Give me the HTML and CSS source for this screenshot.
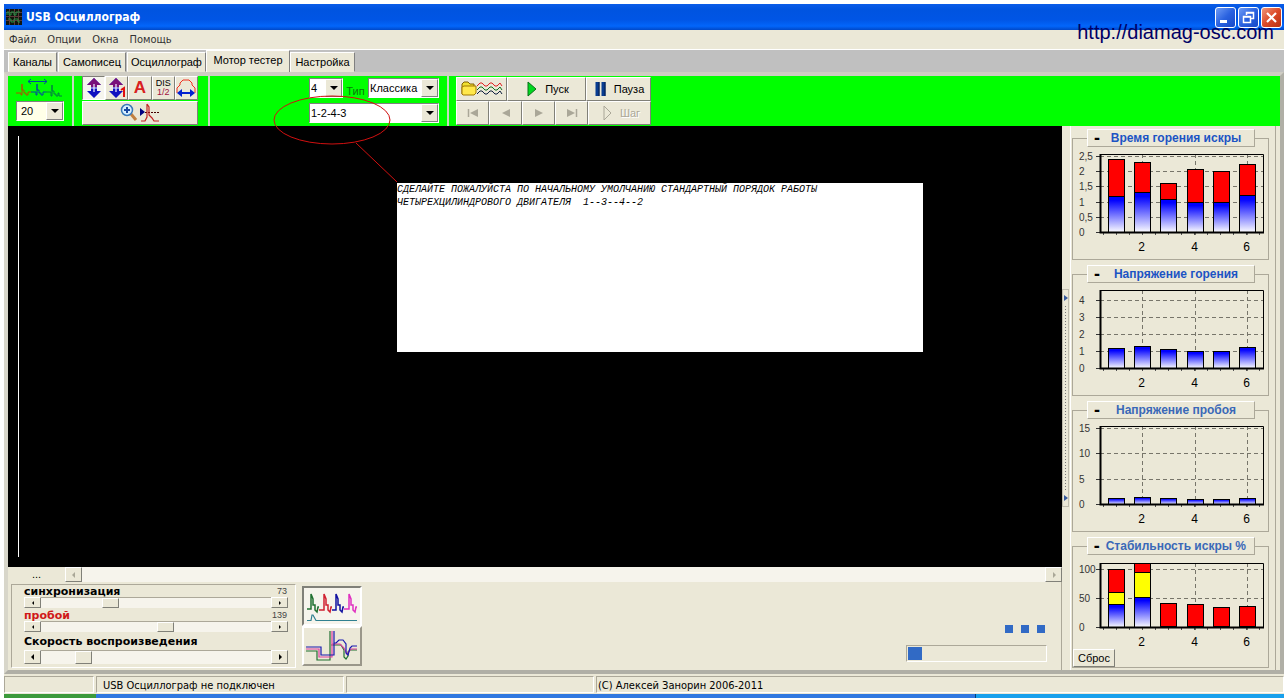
FILE: index.html
```html
<!DOCTYPE html>
<html lang="ru">
<head>
<meta charset="utf-8">
<title>USB Осциллограф</title>
<link rel="stylesheet" href="styles.css">
</head>
<body>
<div class="window">
  <header class="titlebar">
    <svg class="app-icon" viewBox="0 0 16 16"><rect width="16" height="16" fill="#10140c"/><path d="M0 3.500H16M0 7.500H16M0 11.500H16M3.500 0V16M8.500 0V16M12.500 0V16" stroke="#5b3a3a" stroke-width="1"/><path d="M1 6V3H3V6H5V3H8V6H10V3H14M2 10H5V13H8V10H12V13H14" fill="none" stroke="#279047"/></svg>
    <h1>USB Осциллограф</h1>
    <div class="window-buttons">
      <button class="win-btn" aria-label="Свернуть"><svg viewBox="0 0 19 19"><path d="M4 13.500H11" stroke="#fff" stroke-width="3"/></svg></button>
      <button class="win-btn" aria-label="Восстановить"><svg viewBox="0 0 19 19"><path d="M7.500 7V4.500H14.500V10.500H12M7 5H15" fill="none" stroke="#fff" stroke-width="1.500"/><path d="M4.500 8.500H11.500V14.500H4.500ZM4 9H12" fill="none" stroke="#fff" stroke-width="1.500"/></svg></button>
      <button class="win-btn close" aria-label="Закрыть"><svg viewBox="0 0 19 19"><path d="M5 5L14 14M14 5L5 14" stroke="#fff" stroke-width="2.200"/></svg></button>
    </div>
  </header>
  <nav class="menu">
    <button>Файл</button><button>Опции</button><button>Окна</button><button>Помощь</button>
  </nav>
  <div class="site-url">http://diamag-osc.com</div>
  <div class="tabs" role="tablist">
    <button role="tab" class="tab t1">Каналы</button>
    <button role="tab" class="tab t2">Самописец</button>
    <button role="tab" class="tab t3">Осциллограф</button>
    <button role="tab" class="tab t4 active" aria-selected="true">Мотор тестер</button>
    <button role="tab" class="tab t5">Настройка</button>
  </div>
  <div class="page">
    <div class="toolbar">
      <div class="tool-group sweep">
        <svg class="sweep-icon" viewBox="0 0 48 22"><path d="M12 3.500H31M15 1L12 3.500L15 6M28 1L31 3.500L28 6" fill="none" stroke="#0048a0"/><path d="M0 15H5V17H6V6V12H8V15H10V17H12V14H15" fill="none" stroke="#b05000"/><path d="M15 14H20V17H21V6V12H23V15H25V17H27V14H30" fill="none" stroke="#0048a0"/><path d="M30 14H35V18H36V7V13H38V16H40V18H42V15H43V18H46" fill="none" stroke="#008040"/></svg>
        <span class="combo cream"><select aria-label="Развёртка"><option>20</option></select><i class="drop"></i></span>
      </div>
      <div class="tool-group modes">
        <div class="row">
          <button class="tb pressed" aria-label="Размах"><svg viewBox="0 0 20 20"><path d="M10 0L17 7H13V13H17L10 20L3 13H7V7H3Z" fill="#1010c0"/><path d="M10 0L17 7H13V9H7V7H3Z" fill="#7a107a"/><path d="M10 6V14M4 10H16" stroke="#eef" stroke-width="1.200"/></svg></button>
          <button class="tb" aria-label="Размах первого"><svg viewBox="0 0 20 20"><path d="M9 0L16 7H12V13H16L9 20L2 13H6V7H2Z" fill="#1010c0"/><path d="M9 0L16 7H12V9H6V7H2Z" fill="#7a107a"/><path d="M9 6V14M3 10H14" stroke="#eef" stroke-width="1.200"/><path d="M14 12L17 10V19" fill="none" stroke="#e01010" stroke-width="2"/></svg></button>
          <button class="tb letter">A</button>
          <button class="tb dis"><span>DIS</span><span class="half">1/2</span></button>
          <button class="tb" aria-label="Период"><svg viewBox="0 0 20 20"><path d="M1 15V10L4 7V5L7 2H13L16 5V7L19 10V15" fill="none" stroke="#f03020"/><path d="M3 15H17" stroke="#0020d0" stroke-width="2"/><path d="M1 15L6 11V19ZM19 15L14 11V19Z" fill="#0020d0"/></svg></button>
        </div>
        <button class="tb wide" aria-label="Увеличить"><svg viewBox="0 0 40 20"><path d="M11 11L16 17" stroke="#c08040" stroke-width="3"/><circle cx="7" cy="7" r="5.500" fill="#d8efff" stroke="#3878b8" stroke-width="1.500"/><path d="M4 7H10M7 4V10" stroke="#1848a0" stroke-width="2"/><path d="M20 5V13L25 9Z" fill="#000080"/><path d="M25 9.500H39" stroke="#400" stroke-dasharray="2 1"/><path d="M21 18H25L27 14V1M27 1L29 4V12L32 15L34 18H39" fill="none" stroke="#c02020" stroke-width="1.200"/></svg></button>
      </div>
      <div class="tool-group order">
        <div class="row">
          <span class="combo cylinders"><select aria-label="Цилиндры"><option>4</option></select><i class="drop"></i></span>
          <label for="kind">Тип</label>
          <span class="combo kind"><select id="kind"><option>Классика</option></select><i class="drop"></i></span>
        </div>
        <span class="combo"><select aria-label="Порядок работы"><option>1-2-4-3</option></select><i class="drop"></i></span>
      </div>
      <div class="tool-group player">
        <div class="row">
          <button class="tb open" aria-label="Открыть запись"><svg viewBox="0 0 42 18"><path d="M1 14V4L3 2H7L9 4H13V7" fill="#f0e030" stroke="#806000"/><path d="M1 14V7L3 6H15V13L13 15H2Z" fill="#ffe84a" stroke="#a07800"/><path d="M16 6L19 3H21L24 6H26L29 3H31L34 6H36L39 3L41 6" fill="none" stroke="#e02020"/><path d="M16 10L19 7H21L24 10H26L29 7H31L34 10H36L39 7L41 10" fill="none" stroke="#107020"/><path d="M16 14L19 11H21L24 14H26L29 11H31L34 14H36L39 11L41 14" fill="none" stroke="#102040"/></svg></button>
          <button class="tb start"><svg class="i16" viewBox="0 0 16 16"><path d="M4 1L12 8L4 15Z" fill="#00d820" stroke="#087018"/></svg>Пуск</button>
          <button class="tb pause"><svg class="i16" viewBox="0 0 16 16"><path d="M4.500 1V15M10.500 1V15" stroke="#083c90" stroke-width="4"/><path d="M6 1V15M12 1V15" stroke="#061c48"/></svg>Пауза</button>
        </div>
        <div class="row">
          <button class="tb nav" disabled aria-label="В начало"><svg class="i16" viewBox="0 0 16 16"><path d="M3.500 4V12" stroke="#aaa798" stroke-width="1.500"/><path d="M13 4V12L5 8Z" fill="#aaa798"/></svg></button>
          <button class="tb nav" disabled aria-label="Назад"><svg class="i16" viewBox="0 0 16 16"><path d="M12 4V12L4 8Z" fill="#aaa798"/></svg></button>
          <button class="tb nav" disabled aria-label="Вперёд"><svg class="i16" viewBox="0 0 16 16"><path d="M4 4V12L12 8Z" fill="#aaa798"/></svg></button>
          <button class="tb nav" disabled aria-label="В конец"><svg class="i16" viewBox="0 0 16 16"><path d="M3 4V12L11 8Z" fill="#aaa798"/><path d="M12.500 4V12" stroke="#aaa798" stroke-width="1.500"/></svg></button>
          <button class="tb step" disabled><svg class="i16" viewBox="0 0 16 16"><path d="M5 1L12 8L5 15Z" fill="none" stroke="#aaa798"/></svg>Шаг</button>
        </div>
      </div>
    </div>

    <div class="content">
      <main class="left">
        <div class="scope"><div class="cursor-line"></div></div>
        <div class="hscroll"><span>...</span><button class="bevel" disabled aria-label="Влево"><svg viewBox="0 0 8 8"><path d="M5 1V7L2 4Z" fill="#aaa798"/></svg></button><div class="hatch"></div><button class="bevel" disabled aria-label="Вправо"><svg viewBox="0 0 8 8"><path d="M3 1V7L6 4Z" fill="#aaa798"/></svg></button></div>
        <div class="controls">
          <div class="sliders">
            <div class="caption"><label for="sync">синхронизация</label><output>73</output></div>
            <div class="slider"><button class="bevel" aria-label="Меньше"><svg viewBox="0 0 8 8"><path d="M5 2V6L3 4Z"/></svg></button><input id="sync" type="range" max="255" value="73"><button class="bevel" aria-label="Больше"><svg viewBox="0 0 8 8"><path d="M3 2V6L5 4Z"/></svg></button></div>
            <div class="caption hot"><label for="spark">пробой</label><output>139</output></div>
            <div class="slider"><button class="bevel" aria-label="Меньше"><svg viewBox="0 0 8 8"><path d="M5 2V6L3 4Z"/></svg></button><input id="spark" type="range" max="255" value="139"><button class="bevel" aria-label="Больше"><svg viewBox="0 0 8 8"><path d="M3 2V6L5 4Z"/></svg></button></div>
            <div class="caption speed"><label for="speed">Скорость воспроизведения</label></div>
            <div class="slider tall"><button class="bevel" aria-label="Медленнее"><svg viewBox="0 0 8 8"><path d="M5 1V7L2 4Z"/></svg></button><input id="speed" type="range" max="100" value="16"><button class="bevel" aria-label="Быстрее"><svg viewBox="0 0 8 8"><path d="M3 1V7L6 4Z"/></svg></button></div>
          </div>
          <div class="views">
            <button class="view on" aria-label="Парад"><svg viewBox="0 0 52 32"><g fill="none" stroke-width="1.500"><path d="M1 19H5V4L7 9V15H9V20L11 22L12 17H13" stroke="#207030"/><path d="M13 20H18V4L20 9V15H22V20L24 22L25 17H26" stroke="#d02030"/><path d="M26 20H30V4L32 9V15H34V20L36 22L37 17H38" stroke="#1010a0"/><path d="M38 19H43V4L45 9V15H47V20L49 22L50 17H51" stroke="#e030c0"/><path d="M1 30.500H5L6 25H7L10 30.500H51" stroke="#308090" stroke-width="1.200"/></g></svg></button>
            <button class="view" aria-label="Наложение"><svg viewBox="0 0 52 32"><g fill="none" stroke-width="1.200"><path d="M0 21H11V30H24V1M25 15H35L38 20V27L40 29L42 26V22L44 20H51" stroke="#207030"/><path d="M0 19H13V27H26V1M26 14H34L38 18L41 24L45 19H51" stroke="#e040a0"/><path d="M0 17H15V25H28V1M28 13H30L33 10H37L40 14V23L42 25L44 18L46 16H51" stroke="#1818b0"/></g></svg></button>
          </div>
          <div class="progress-area">
            <div class="dots"><i></i><i></i><i></i></div>
            <div class="progress"><i></i></div>
          </div>
        </div>
      </main>
      <div class="splitter"><div class="grip"><svg viewBox="0 0 6 8"><path d="M1 1V7L5 4Z"/></svg><svg viewBox="0 0 6 8"><path d="M1 1V7L5 4Z"/></svg></div></div>
      <aside class="charts">
        <fieldset><legend><button class="chart-title c1"><b>-</b><span>Время горения искры</span></button></legend><svg class="chart" data-chart="burn"></svg></fieldset>
        <fieldset><legend><button class="chart-title c1"><b>-</b><span>Напряжение горения</span></button></legend><svg class="chart" data-chart="voltage"></svg></fieldset>
        <fieldset><legend><button class="chart-title c2"><b>-</b><span>Напряжение пробоя</span></button></legend><svg class="chart" data-chart="breakdown"></svg></fieldset>
        <fieldset><legend><button class="chart-title c2"><b>-</b><span>Стабильность искры %</span></button></legend><svg class="chart short" data-chart="stability"></svg><button class="reset">Сброс</button></fieldset>
      </aside>
    </div>
  </div>
  <footer class="status"><span></span><span>USB Осциллограф не подключен</span><span></span><span>(C) Алексей Занорин 2006-2011</span></footer>
</div>
<div class="taskbar"><i></i><i></i><i></i></div>
<div class="note">СДЕЛАЙТЕ ПОЖАЛУЙСТА ПО НАЧАЛЬНОМУ УМОЛЧАНИЮ СТАНДАРТНЫЙ ПОРЯДОК РАБОТЫ<br>ЧЕТЫРЕХЦИЛИНДРОВОГО ДВИГАТЕЛЯ&nbsp; 1--3--4--2</div>
<svg class="callout" viewBox="0 0 130 90"><ellipse cx="62" cy="25" rx="58" ry="24"/><path d="M86 48L127 87"/></svg>
<script src="charts.js"></script>
</body>
</html>
```

FILE: styles.css
```css
* { box-sizing: border-box; }
body {
  margin: 0;
  min-height: 100vh;
  padding: 4px 4px 0;
  display: flex;
  flex-direction: column;
  background: #fff;
  color: #000;
  font: 11px/14px "Liberation Sans", Arial, sans-serif;
}
button, select, input { font: inherit; color: inherit; margin: 0; padding: 0; border-radius: 0; }
button { white-space: nowrap; }
svg { display: block; flex: none; }
.window { flex: 1; display: flex; flex-direction: column; background: #ebe8d7; position: relative; }

.titlebar {
  height: 26px;
  display: flex;
  align-items: center;
  gap: 4px;
  padding: 0 2px;
  background: linear-gradient(#0a5ce8, #0054e0 20%, #0055e5 60%, #0266fb 85%, #0048c8);
  color: #fff;
}
.app-icon { width: 16px; height: 16px; }
.titlebar h1 { margin: 0; flex: 1; font: bold 12px/16px "DejaVu Sans Condensed", "DejaVu Sans", sans-serif; }
.window-buttons { display: flex; gap: 2px; }
.win-btn { width: 21px; height: 21px; border: 1px solid #fff; border-radius: 3px; background: linear-gradient(135deg, #6f9cf5, #2a62e0 50%, #1648c8); }
.win-btn svg { width: 19px; height: 19px; }
.win-btn.close { background: linear-gradient(135deg, #f0967a, #dc4a28 50%, #b83010); }

.menu { height: 20px; display: flex; align-items: center; gap: 11px; padding: 0 5px; border-bottom: 1px solid #fff; }
.menu button { border: 0; background: none; font: 11px/14px "DejaVu Sans Condensed", "DejaVu Sans", sans-serif; color: #333; }
.site-url { position: absolute; top: 17px; right: 10px; font-size: 20px; line-height: 22px; color: #000066; }

.tabs { display: flex; align-items: flex-end; height: 22px; padding-left: 4px; background: #c0c0c0; }
.tab { height: 20px; border: 1px solid; border-color: #fff #808080 transparent #fff; background: #ebe8d7; margin-right: 1px; }
.tab.active { height: 22px; padding-bottom: 3px; border-bottom: 0; margin: 0; }
.t1 { width: 49px; }
.t2 { width: 68px; }
.t3 { width: 79px; margin: 0; }
.t4 { width: 84px; }
.t5 { width: 65px; }

.page { flex: 1; display: flex; flex-direction: column; border: 4px solid; border-color: #cfcdc4 #b0afa6 #b0afa6 #d8d6ca; }
.toolbar { display: flex; height: 50px; background: #00ff00; }
.tool-group { display: flex; flex-direction: column; gap: 1px; border-right: 2px solid #c8d8c0; }
.row { display: flex; }
.sweep { width: 66px; padding: 2px 8px 0; }
.sweep-icon { width: 48px; height: 22px; }
.modes { width: 136px; padding: 0 10px 0 8px; }
.order { width: 239px; padding: 2px 8px 0 99px; gap: 5px; }
.order .row { justify-content: space-between; }
.order label { align-self: flex-end; color: #087808; line-height: 13px; }
.player { padding: 1px 0 0 7px; gap: 0; border: 0; }
.player .tb { height: 24px; }

.combo { display: grid; height: 20px; border: 1px solid; border-color: #808080 #fff #fff #808080; background: #fff; }
.combo select { grid-area: 1 / 1; appearance: none; border: 0; background: none; padding-left: 1px; width: 100%; }
.drop { grid-area: 1 / 1; justify-self: end; width: 17px; background: #ebe8d7; border: 1px solid; border-color: #fff #808080 #808080 #fff; pointer-events: none; display: grid; place-items: center; }
.drop::after { content: ""; border: 4px solid transparent; border-top-color: #000; border-bottom: 0; }
.cream { background: #ffffe8; }
.cream select { padding-left: 4px; }
.cylinders { width: 34px; }
.kind { width: 71px; }

.tb { height: 24px; display: flex; align-items: center; justify-content: center; gap: 5px; background: #ebe8d7; border: 1px solid; border-color: #fff #808078 #808078 #fff; }
.tb:disabled { color: #aaa798; text-shadow: 1px 1px 0 #fff; }
.modes .row .tb { flex: 1; min-width: 0; }
.modes .tb svg { width: 20px; height: 20px; }
.modes .wide svg { width: 40px; }
.tb.pressed { border-color: #808078 #fff #fff #808078; background: #f6f5ee; }
.letter { font-weight: bold; font-size: 17px; color: #d82020; }
.dis { flex-direction: column; gap: 0; font-size: 9px; line-height: 9px; }
.half { color: #a01040; }
.i16 { width: 16px; height: 16px; }
.open { width: 51px; }
.open svg { width: 42px; height: 18px; }
.start { width: 79px; }
.pause { width: 65px; }
.nav { width: 33px; }
.step { width: 63px; }

.content { flex: 1; display: flex; }
.left { flex: 1; display: flex; flex-direction: column; min-width: 0; }
.scope { flex: 1; background: #000; padding: 10px; display: flex; }
.cursor-line { width: 1px; background: #fff; }
.hscroll { height: 15px; display: flex; }
.hscroll span { width: 57px; text-align: center; }
.hatch { flex: 1; background: #f6f4ec; }
.bevel { width: 17px; display: grid; place-items: center; background: #ebe8d7; border: 1px solid; border-color: #fff #808078 #808078 #fff; }
.bevel svg { width: 8px; height: 8px; }

.controls { height: 88px; display: flex; align-items: flex-start; gap: 6px; padding: 2px 14px 2px 3px; border-right: 1px solid #aca899; }
.sliders { width: 285px; height: 84px; padding: 0 7px 0 12px; border: 1px solid; border-color: #aca899 #fff #fff #aca899; }
.caption { display: flex; justify-content: space-between; height: 12px; font: bold 11px/13px "DejaVu Sans", Verdana, sans-serif; }
.caption output { font: 9px/13px "Liberation Sans", Arial, sans-serif; color: #444; padding-right: 1px; }
.hot label { color: #d01818; }
.caption.speed { height: 15px; line-height: 15px; margin-top: 2px; margin-bottom: 1px; }
.slider { display: flex; height: 11px; margin-bottom: 1px; }
.slider.tall { height: 14px; }
.slider .bevel { width: 17px; }
.slider input { flex: 1; min-width: 0; appearance: none; height: 100%; background: #f6f4ec; border-top: 1px solid #aca899; }
.slider input::-webkit-slider-thumb { appearance: none; width: 17px; height: 10px; background: #ebe8d7; border: 1px solid; border-color: #fff #808078 #808078 #fff; }
.slider.tall input::-webkit-slider-thumb { height: 13px; }
.views { display: flex; flex-direction: column; padding-top: 2px; }
.view { width: 60px; height: 40px; display: grid; place-items: center; background: #ebe8d7; border: 2px solid; border-color: #fff #9a978a #9a978a #fff; }
.view.on { border-color: #808078 #fff #fff #808078; background: #f6f4ec; }
.view svg { width: 52px; height: 32px; }
.progress-area { margin-left: auto; padding-top: 41px; }
.dots { display: flex; justify-content: flex-end; gap: 8px; padding-right: 2px; margin-bottom: 12px; }
.dots i { width: 8px; height: 8px; background: #316ac5; }
.progress { width: 141px; height: 17px; padding: 1px; border: 1px solid; border-color: #aca899 #fff #fff #aca899; }
.progress i { display: block; width: 14px; height: 13px; background: #316ac5; }

.splitter { width: 8px; display: flex; align-items: center; }
.grip { width: 7px; height: 218px; display: flex; flex-direction: column; justify-content: space-between; padding: 4px 0; border: 1px solid #c0bdae; background: repeating-linear-gradient(#777 0 1px, transparent 1px 3px) 2px 16px / 1px 186px no-repeat; }
.grip svg { width: 6px; height: 8px; fill: #35599c; }

.charts { width: 210px; display: flex; flex-direction: column; gap: 5px; padding: 3px 11px 0 1px; border-left: 1px solid #fff; background: linear-gradient(#aca899, #aca899) right 4px top / 1px 100% no-repeat; }
fieldset { margin: 0; padding: 0; border: 1px solid #aca899; min-width: 0; }
legend { padding: 0; margin-left: 14px; }
.chart-title { width: 168px; height: 18px; display: flex; align-items: center; background: #ebe8d7; border: 1px solid; border-color: #fff #aca899 #aca899 #fff; font-size: 12px; font-weight: bold; }
.chart-title b { width: 18px; font-size: 18px; color: #000; }
.chart-title span { flex: 1; padding-right: 8px; text-align: center; }
.c1 { color: #1c54c4; }
.c2 { color: #3a68b8; }
.chart { width: 194px; height: 112px; overflow: hidden; font-size: 10px; }
.chart.short { height: 94px; }
.chart .category { font-size: 12px; }
.reset { display: block; width: 42px; height: 18px; background: #ebe8d7; border: 1px solid; border-color: #fff #808078 #808078 #fff; }

.status { display: flex; gap: 2px; height: 20px; padding-top: 2px; font: 11px/17px "DejaVu Sans Condensed", "DejaVu Sans", sans-serif; }
.status span { height: 17px; padding-left: 6px; border: 1px solid; border-color: #aca899 #fff #fff #aca899; }
.status span:nth-child(1) { width: 90px; }
.status span:nth-child(2) { width: 248px; }
.status span:nth-child(3) { width: 248px; }
.status span:nth-child(4) { flex: 1; padding-left: 1px; }
.taskbar { height: 4px; display: flex; }
.taskbar i { background: #3078e0; flex: 880; }
.taskbar i:first-child { background: #3c9a3c; flex: 92; }
.taskbar i:last-child { background: #18a0ec; flex: 308; border-left: 1px solid #004080; }

.note { position: absolute; left: 397px; top: 183px; width: 526px; height: 169px; background: #fff; font: italic 10px/13px "Liberation Mono", monospace; white-space: nowrap; }
.callout { position: absolute; left: 270px; top: 95px; width: 130px; height: 90px; fill: none; stroke: #d01010; pointer-events: none; }
```

FILE: charts.js
```js
const NS = "http://www.w3.org/2000/svg";
const BAR_X = [35, 61, 87, 114, 140, 166];
const LEFT = 27, RIGHT = 190, TOP = 7;

// Each bar lists cumulative levels: blue, then the colours above it.
const charts = {
  burn: { base: 85, unit: 30.4, ticks: [0, 0.5, 1, 1.5, 2, 2.5], colors: ["blue", "#f00"],
    bars: [[1.2, 2.4], [1.32, 2.3], [1.1, 1.6], [1, 2.07], [1, 2], [1.22, 2.23]] },
  voltage: { base: 85, unit: 17, ticks: [0, 1, 2, 3, 4], colors: ["blue"],
    bars: [[1.17], [1.3], [1.1], [1], [1], [1.22]] },
  breakdown: { base: 85, unit: 5.07, ticks: [0, 5, 10, 15], colors: ["blue"],
    bars: [[1.1], [1.3], [1.1], [0.9], [0.9], [1.1]] },
  stability: { base: 72, top: 8, unit: 0.58, ticks: [0, 50, 100], colors: ["blue", "#ff0", "#f00"],
    bars: [[40, 60, 100], [51, 95, 111], [0, 2, 41], [0, 2, 40], [0, 2, 34], [0, 2, 36]] }
};

function add(parent, name, attrs, text) {
  const el = document.createElementNS(NS, name);
  for (const key in attrs) el.setAttribute(key, attrs[key]);
  if (text !== undefined) el.textContent = text;
  parent.appendChild(el);
  return el;
}

for (const [id, c] of Object.entries(charts)) {
  const svg = document.querySelector(`[data-chart="${id}"]`);
  const top = c.top || TOP;
  const grad = add(svg, "linearGradient", { id: "g-" + id, x1: 0, y1: 0, x2: 0, y2: 1 });
  add(grad, "stop", { offset: 0.1, "stop-color": "#0000ff" });
  add(grad, "stop", { offset: 1, "stop-color": "#ffffff" });
  for (const t of c.ticks) {
    const y = Math.round(c.base - t * c.unit) + 0.5;
    add(svg, "path", { d: `M${LEFT} ${y}H${RIGHT}`, stroke: "#77756a", "stroke-dasharray": "4 3" });
    add(svg, "path", { d: `M23 ${y}H27`, stroke: "#333" });
    add(svg, "text", { x: 6, y: y + 3, fill: "#333" }, String(t).replace(".", ","));
  }
  [2, 4, 6].forEach((n, i) => {
    const x = [69.5, 122.5, 174.5][i];
    add(svg, "path", { d: `M${x} ${top}V${c.base + 5}`, stroke: "#77756a", "stroke-dasharray": "4 3" });
    add(svg, "text", { x: x - 1, y: c.base + 19, "text-anchor": "middle", class: "category" }, n);
  });
  for (let x = 30.5; x < RIGHT; x += 13) add(svg, "path", { d: `M${x} ${c.base}v3`, stroke: "#555" });
  c.bars.forEach((levels, i) => {
    let low = 0;
    levels.forEach((level, k) => {
      const y = Math.max(top, Math.round(c.base - level * c.unit));
      const bottom = Math.round(c.base - low * c.unit);
      if (bottom > y) add(svg, "rect", { x: BAR_X[i] + 0.5, y: y + 0.5, width: 16, height: bottom - y,
        fill: k ? c.colors[k] : `url(#g-${id})`, stroke: "#000" });
      low = level;
    });
  });
  add(svg, "path", { d: `M${LEFT} ${top + 0.5}H${RIGHT + 0.5}V${c.base}`, fill: "none", stroke: "#000" });
  add(svg, "path", { d: `M${LEFT + 0.5} ${top}V${c.base + 0.5}H${RIGHT + 1}`, fill: "none", stroke: "#000", "stroke-width": 2 });
}
```
